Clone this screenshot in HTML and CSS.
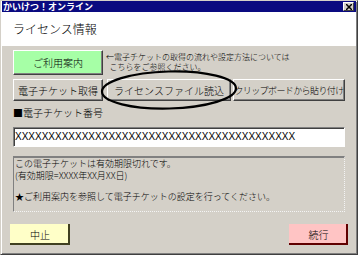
FILE: index.html
```html
<!DOCTYPE html>
<html lang="ja">
<head>
<meta charset="UTF-8">
<title>かいけつ！オンライン</title>
<link rel="stylesheet" href="styles.css">
</head>
<body>
<div class="window">
    <div class="titlebar">
        <span class="title">かいけつ！オンライン</span>
        <span class="close">
            <svg width="6" height="6" viewBox="0 0 6 6"><path d="M0 0L6 6M6 0L0 6" stroke="#000" stroke-width="1.5"/></svg>
        </span>
    </div>
    <div class="header">ライセンス情報</div>

    <div class="content">
        <div class="row-guide">
            <button class="btn btn-green">ご利用案内</button>
            <p class="note">←電子チケットの取得の流れや設定方法については<br>&nbsp;&nbsp;こちらをご参照ください。</p>
        </div>

        <div class="row-actions">
            <button class="btn btn-get">電子チケット取得</button>
            <button class="btn btn-file">ライセンスファイル読込</button>
            <button class="btn btn-paste">クリップボードから貼り付け</button>
            <!-- 丸印 -->
            <svg class="circle-mark" width="140" height="42" viewBox="0 0 140 42">
                <ellipse cx="70" cy="21" rx="67" ry="18.5" fill="none" stroke="#000" stroke-width="2.2" transform="rotate(-1.5 70 21)"/>
            </svg>
        </div>

        <div class="label">■電子チケット番号</div>
        <div class="field">XXXXXXXXXXXXXXXXXXXXXXXXXXXXXXXXXXXXXXXXXX</div>

        <div class="message">
            <p>この電子チケットは有効期限切れです。</p>
            <p>(有効期限=XXXX年XX月XX日)</p>
            <p class="message-hint">★ご利用案内を参照して電子チケットの設定を行ってください。</p>
        </div>
    </div>

    <div class="footer">
        <button class="btn-flat btn-cancel">中止</button>
        <button class="btn-flat btn-next">続行</button>
    </div>
</div>
</body>
</html>
```

FILE: styles.css
```css
* {
    box-sizing: border-box;
}

body {
    margin: 0;
    font-family: "Noto Sans CJK JP", sans-serif;
    font-size: 10px;
    font-weight: 300;
    color: #000;
}

.window {
    width: 358px;
    height: 255px;
    background-color: #d4d0c8;
    border: 1px solid;
    border-color: #d4d0c8 #404040 #404040 #d4d0c8;
    box-shadow: inset 1px 1px #fff, inset -1px -1px #808080;
    padding: 0 1px 1px 1px;
}

.titlebar {
    height: 11px;
    background-color: #0a0a80;
    color: #fff;
    display: flex;
    align-items: center;
    justify-content: space-between;
    padding: 0 2px 0 1px;
}

.title {
    font-size: 9px;
    font-weight: bold;
    line-height: 11px;
}

.close {
    width: 11px;
    height: 9px;
    background-color: #d4d0c8;
    border: 1px solid;
    border-color: #fff #404040 #404040 #fff;
    display: flex;
    align-items: center;
    justify-content: center;
}

.header {
    height: 34px;
    background-color: #fff;
    font-size: 12px;
    line-height: 34px;
    padding-left: 11px;
}

.content {
    padding: 0 11px 0 11px;
}

.btn {
    font-family: inherit;
    font-weight: 300;
    font-size: 10px;
    padding: 0;
    background-color: #d4d0c8;
    border: 1px solid;
    border-color: #fff #404040 #404040 #fff;
    box-shadow: inset -1px -1px #808080;
    color: #000;
}

.row-guide {
    display: flex;
    align-items: flex-start;
    margin-top: 4px;
}

.btn-green {
    width: 90px;
    height: 25px;
    background-color: #a6ffa6;
}

.note {
    margin: 2px 0 0 3px;
    font-size: 8px;
    line-height: 10px;
}

.row-actions {
    position: relative;
    display: flex;
    margin-top: 4px;
    height: 22px;
}

.btn-get {
    width: 90px;
}

.btn-file {
    width: 124px;
    margin-left: 4px;
}

.btn-paste {
    width: 112px;
    margin-left: 2px;
    font-size: 9px;
    letter-spacing: -0.6px;
}

.circle-mark {
    position: absolute;
    left: 86px;
    top: -10px;
}

.label {
    margin-top: 5px;
    font-size: 10px;
    line-height: 14px;
}

.field {
    margin-top: 7px;
    height: 20px;
    background-color: #fff;
    border: 1px solid;
    border-color: #808080 #fff #fff #808080;
    box-shadow: inset 1px 1px #404040;
    font-family: "Liberation Sans", sans-serif;
    font-weight: normal;
    font-size: 10px;
    line-height: 18px;
    padding-left: 1px;
    overflow: hidden;
    white-space: nowrap;
}

.message {
    margin-top: 9px;
    height: 56px;
    border-top: 2px solid #808080;
    border-left: 1px solid #808080;
    border-right: 1px dotted #f4f4f4;
    border-bottom: 1px dotted #f4f4f4;
    font-size: 9px;
    line-height: 12px;
    padding: 0 0 0 1px;
}

.message p {
    margin: 0;
}

.message .message-hint {
    margin-top: 9px;
}

.footer {
    display: flex;
    justify-content: space-between;
    padding: 0 8px;
    margin-top: 12px;
}

.btn-flat {
    font-family: inherit;
    font-weight: 300;
    font-size: 10px;
    width: 60px;
    height: 21px;
    padding: 0;
    border: none;
    color: #000;
}

.btn-cancel {
    background-color: #ffffc8;
    box-shadow: inset -2px -2px #404020;
}

.btn-next {
    width: 59px;
    background-color: #ffc4c4;
    box-shadow: inset -2px -2px #600000;
}
```
